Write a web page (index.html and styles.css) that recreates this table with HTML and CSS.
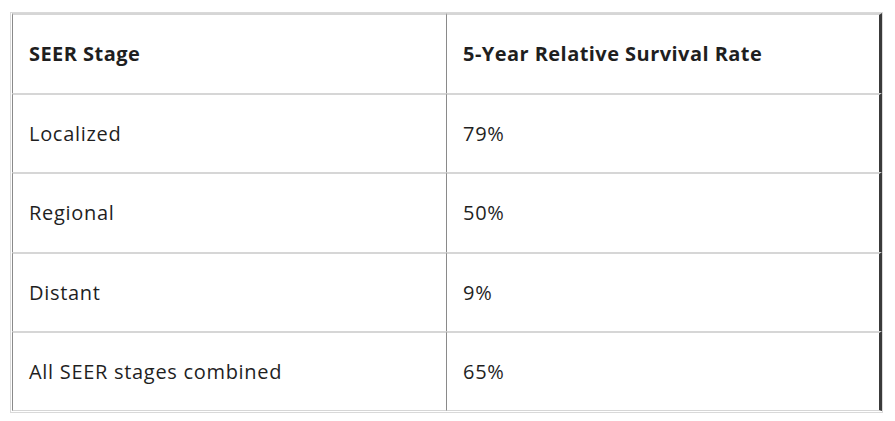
FILE: index.html
```html
<!DOCTYPE html>
<html>
<head>
<meta charset="utf-8">
<link rel="stylesheet" href="styles.css">
</head>
<body>
<div class="wrap">
<table class="seer">
<tr><th class="c1">SEER Stage</th><th class="c2">5-Year Relative Survival Rate</th></tr>
<tr><td class="c1">Localized</td><td class="c2">79%</td></tr>
<tr><td class="c1">Regional</td><td class="c2">50%</td></tr>
<tr><td class="c1">Distant</td><td class="c2">9%</td></tr>
<tr class="last"><td class="c1">All SEER stages combined</td><td class="c2">65%</td></tr>
</table>
</div>
</body>
</html>
```
FILE: styles.css
```css
html, body { margin: 0; padding: 0; background: #fff; }
body { font-family: "Open Sans", "Noto Sans", sans-serif; color: #1f1f1f; }
.wrap {
  box-sizing: border-box;
  width: 873px;
  margin: 12px 0 0 10px;
  border: 1px solid #d9d9d9;
  padding: 0 0 1px 1px;
}
.seer { width: 100%; border-collapse: separate; border-spacing: 0; }
.seer th, .seer td {
  box-sizing: border-box;
  height: 79.6px;
  border-top: 2px solid #d6d6d6;
  text-align: left;
  padding: 0 0 0 16px;
  font-size: 20px;
  vertical-align: middle;
}
.seer th { font-weight: 700; letter-spacing: 0.45px; }
.seer td { font-weight: 400; letter-spacing: 0.7px; }
.seer .c1 { width: 434px; border-left: 1px solid #8a8a8a; }
.seer .c2 { border-left: 1px solid #8a8a8a; border-right: 3px solid #3a3a3a; }
.seer .last td { border-bottom: 1px solid #d6d6d6; }
```
